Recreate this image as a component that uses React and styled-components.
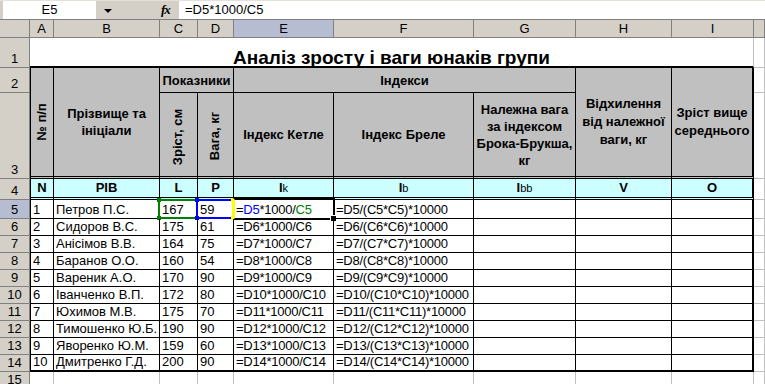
import React from 'react';
import styled, { createGlobalStyle, css } from 'styled-components';

const Global = createGlobalStyle`
  html, body { margin: 0; padding: 0; background: #fff; overflow: hidden; }
  body { font-family: 'Liberation Sans', Arial, sans-serif; }
`;

const Frame = styled.div`
  width: 765px;
  height: 384px;
  display: flex;
  flex-direction: column;
  background: #fff;
  overflow: hidden;
`;

const FormulaBar = styled.div`
  height: 19px;
  display: flex;
  align-items: stretch;
  background: #d4d0c8;
  border-top: 1px solid #e4e1da;
  box-sizing: border-box;
`;

const NameBox = styled.div`
  width: 93px;
  margin-left: 3px;
  background: #fff;
  font-size: 13px;
  line-height: 18px;
  text-align: center;
  color: #000;
`;

const DropArrow = styled.div`
  width: 0;
  height: 0;
  margin: 8px 0 0 8px;
  border-left: 4px solid transparent;
  border-right: 4px solid transparent;
  border-top: 4px solid #000;
`;

const Fx = styled.div`
  margin-left: 49px;
  width: 14px;
  font-family: 'Liberation Serif', 'Times New Roman', serif;
  font-style: italic;
  font-weight: bold;
  font-size: 13px;
  line-height: 18px;
  letter-spacing: -1px;
`;

const FormulaInput = styled.div`
  flex: 1;
  margin-left: 4px;
  background: #fff;
  font-size: 13px;
  line-height: 18px;
  padding-left: 6px;
`;

const Sheet = styled.div`
  flex: 1;
  display: grid;
  grid-template-columns: 30px 24px 106px 38px 36px 100px 140px 102px 96px 82px 1fr;
  grid-template-rows: 18px 30px 25px 86px 21px 19px repeat(9, 17px) 1fr;
  border-top: 1px solid #808080;
  font-size: 13px;
  color: #000;
`;

const place = css`
  grid-column: ${(p) => p.$col} / span ${(p) => p.$cs || 1};
  grid-row: ${(p) => p.$row} / span ${(p) => p.$rs || 1};
  box-sizing: border-box;
  min-width: 0;
`;

const Corner = styled.div`
  ${place}
  background: #d4d0c8;
  border-right: 1px solid #808080;
  border-bottom: 1px solid #808080;
`;

const ColHead = styled.div`
  ${place}
  background: ${(p) => (p.$active ? '#b6bdd2' : '#d4d0c8')};
  border-right: 1px solid #808080;
  border-bottom: 1px solid #808080;
  display: flex;
  align-items: center;
  justify-content: center;
  line-height: 16px;
`;

const RowHead = styled.div`
  ${place}
  background: ${(p) => (p.$active ? '#b6bdd2' : '#d4d0c8')};
  border-right: 1px solid #808080;
  border-bottom: 1px solid #808080;
  display: flex;
  align-items: flex-end;
  justify-content: center;
  line-height: 16px;
`;

const Cell = styled.div`
  ${place}
  position: relative;
  display: flex;
  align-items: flex-end;
  padding: 0 2px;
  white-space: nowrap;
  line-height: 16px;
  letter-spacing: ${(p) => (p.$formula ? '-0.25px' : 'normal')};
  border-right: 1px solid ${(p) => (p.$grid ? '#c0c0c0' : '#000')};
  border-bottom: ${(p) => (p.$bottom ? '2px solid #000' : `1px solid ${p.$grid ? '#c0c0c0' : '#000'}`)};
  ${(p) => p.$first && 'border-left: 1px solid #000;'}
  ${(p) => p.$last && 'border-right: 2px solid #000;'}
`;

const Title = styled(Cell)`
  justify-content: center;
  font-size: 19px;
  font-weight: bold;
  line-height: 16px;
  border-right: 1px solid #c0c0c0;
  border-bottom: 2px solid #000;
`;

const HeadCell = styled(Cell)`
  background: #c0c0c0;
  font-weight: bold;
  align-items: center;
  justify-content: center;
  text-align: center;
  white-space: ${(p) => (p.$nowrap ? 'nowrap' : 'normal')};
  line-height: ${(p) => p.$lh || 17}px;
  border-bottom: ${(p) => (p.$double ? '3px double #000' : '1px solid #000')};
`;

const Vertical = styled.span`
  flex: none;
  white-space: nowrap;
  transform: rotate(-90deg) translateX(${(p) => p.$shift || 0}px);
  line-height: 16px;
`;

const KeyCell = styled(Cell)`
  background: #ccffff;
  font-weight: bold;
  justify-content: center;
  align-items: center;
  border-bottom: 3px double #000;
`;

const Sub = styled.sub`
  font-weight: normal;
  font-size: 11px;
  vertical-align: -3px;
  line-height: 0;
`;

const Ref = styled.span`
  color: ${(p) => p.$color};
`;

const RangeMark = styled.div`
  position: absolute;
  left: -2px;
  top: -1px;
  right: -1px;
  bottom: -1px;
  border: 2px solid ${(p) => p.$color};
  pointer-events: none;
  ${(p) => p.$edge && `border-right-color: ${p.$edge};`}
`;

const Handle = styled.i`
  position: absolute;
  width: 4px;
  height: 4px;
  background: ${(p) => p.$color};
  ${(p) => (p.$top ? 'top: -3px;' : 'bottom: -3px;')}
  ${(p) => (p.$left ? 'left: -3px;' : 'right: -3px;')}
`;

const ActiveMark = styled.div`
  position: absolute;
  left: -1px;
  top: -2px;
  right: -2px;
  bottom: -2px;
  border: 2px solid #000;
  border-left-color: #ffff00;
  pointer-events: none;
`;

const FillHandle = styled.i`
  position: absolute;
  right: -4px;
  bottom: -4px;
  width: 5px;
  height: 5px;
  background: #000;
  border: 1px solid #fff;
`;

const COLS = ['A', 'B', 'C', 'D', 'E', 'F', 'G', 'H', 'I', ''];

const people = [
  ['Петров П.С.', 167, 59],
  ['Сидоров В.С.', 175, 61],
  ['Анісімов В.В.', 164, 75],
  ['Баранов О.О.', 160, 54],
  ['Вареник А.О.', 170, 90],
  ['Іванченко В.П.', 172, 80],
  ['Юхимов М.В.', 175, 70],
  ['Тимошенко Ю.Б.', 190, 90],
  ['Яворенко Ю.М.', 159, 60],
  ['Дмитренко Г.Д.', 200, 90],
];

function Marks({ color, edge }) {
  return (
    <RangeMark $color={color} $edge={edge}>
      <Handle $color={color} $top $left />
      <Handle $color={edge || color} $top />
      <Handle $color={color} $left />
      <Handle $color={edge || color} />
    </RangeMark>
  );
}

function DataRow({ idx, person }) {
  const r = idx + 5;
  const row = idx + 6;
  const [name, h, w] = person;
  const last = idx === people.length - 1;
  const first = idx === 0;
  return (
    <>
      <RowHead $col={1} $row={row} $active={first}>{r}</RowHead>
      <Cell $col={2} $row={row} $first $bottom={last}>{idx + 1}</Cell>
      <Cell $col={3} $row={row} $bottom={last}>{name}</Cell>
      <Cell $col={4} $row={row} $bottom={last}>
        {h}
        {first && <Marks color="#008000" />}
      </Cell>
      <Cell $col={5} $row={row} $bottom={last}>
        {w}
        {first && <Marks color="#0000ff" edge="#ffff00" />}
      </Cell>
      <Cell $col={6} $row={row} $bottom={last} $formula>
        {first ? (
          <>
            =<Ref $color="#0000ff">D5</Ref>*1000/<Ref $color="#008000">C5</Ref>
            <ActiveMark>
              <FillHandle />
            </ActiveMark>
          </>
        ) : (
          `=D${r}*1000/C${r}`
        )}
      </Cell>
      <Cell $col={7} $row={row} $bottom={last} $formula>{`=D${r}/(C${r}*C${r})*10000`}</Cell>
      <Cell $col={8} $row={row} $bottom={last} />
      <Cell $col={9} $row={row} $bottom={last} />
      <Cell $col={10} $row={row} $last $bottom={last} />
      <Cell $col={11} $row={row} $grid />
    </>
  );
}

export default function App() {
  return (
    <Frame>
      <Global />
      <FormulaBar>
        <NameBox>E5</NameBox>
        <DropArrow />
        <Fx>fx</Fx>
        <FormulaInput>=D5*1000/C5</FormulaInput>
      </FormulaBar>
      <Sheet>
        <Corner $col={1} $row={1} />
        {COLS.map((c, i) => (
          <ColHead key={i} $col={i + 2} $row={1} $active={c === 'E'}>{c}</ColHead>
        ))}

        <RowHead $col={1} $row={2}>1</RowHead>
        <Title $col={2} $cs={9} $row={2}>Аналіз зросту і ваги юнаків групи</Title>
        <Cell $col={11} $row={2} $grid />

        <RowHead $col={1} $row={3}>2</RowHead>
        <RowHead $col={1} $row={4}>3</RowHead>
        <HeadCell $col={2} $row={3} $rs={2} $first $double>
          <Vertical>№ п/п</Vertical>
        </HeadCell>
        <HeadCell $col={3} $row={3} $rs={2} $double>
          Прізвище та<br />ініціали
        </HeadCell>
        <HeadCell $col={4} $cs={2} $row={3} $nowrap>Показники</HeadCell>
        <HeadCell $col={4} $row={4} $double>
          <Vertical $shift={-2}>Зріст, см</Vertical>
        </HeadCell>
        <HeadCell $col={5} $row={4} $double>
          <Vertical $shift={-1}>Вага, кг</Vertical>
        </HeadCell>
        <HeadCell $col={6} $cs={3} $row={3} $nowrap>Індекси</HeadCell>
        <HeadCell $col={6} $row={4} $double $nowrap>Індекс Кетле</HeadCell>
        <HeadCell $col={7} $row={4} $double $nowrap>Індекс Бреле</HeadCell>
        <HeadCell $col={8} $row={4} $double>
          Належна вага<br />за індексом<br />Брока-Брукша,<br />кг
        </HeadCell>
        <HeadCell $col={9} $row={3} $rs={2} $double $lh={18}>
          Відхилення<br />від належної<br />ваги, кг
        </HeadCell>
        <HeadCell $col={10} $row={3} $rs={2} $double $last $lh={18}>
          Зріст вище<br />середнього
        </HeadCell>
        <Cell $col={11} $row={3} $grid />
        <Cell $col={11} $row={4} $grid />

        <RowHead $col={1} $row={5}>4</RowHead>
        <KeyCell $col={2} $row={5} $first>N</KeyCell>
        <KeyCell $col={3} $row={5}>PIB</KeyCell>
        <KeyCell $col={4} $row={5}>L</KeyCell>
        <KeyCell $col={5} $row={5}>P</KeyCell>
        <KeyCell $col={6} $row={5}>I<Sub>k</Sub></KeyCell>
        <KeyCell $col={7} $row={5}>I<Sub>b</Sub></KeyCell>
        <KeyCell $col={8} $row={5}>I<Sub>bb</Sub></KeyCell>
        <KeyCell $col={9} $row={5}>V</KeyCell>
        <KeyCell $col={10} $row={5} $last>O</KeyCell>
        <Cell $col={11} $row={5} $grid />

        {people.map((p, i) => (
          <DataRow key={i} idx={i} person={p} />
        ))}

        <RowHead $col={1} $row={16}>15</RowHead>
        {COLS.map((c, i) => (
          <Cell key={i} $col={i + 2} $row={16} $grid />
        ))}
      </Sheet>
    </Frame>
  );
}
